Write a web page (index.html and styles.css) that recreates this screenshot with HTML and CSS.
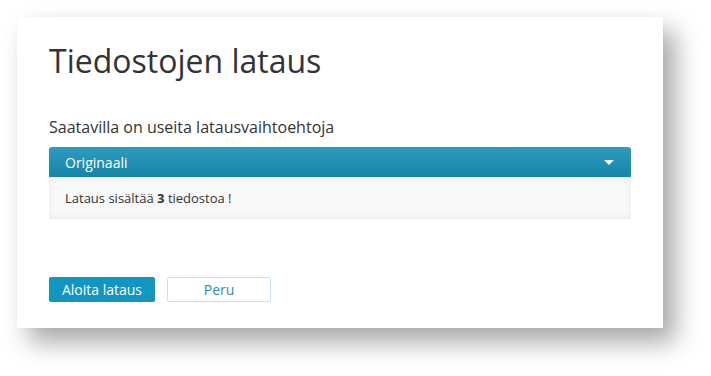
FILE: index.html
```html
<!DOCTYPE html>
<html lang="fi">
<head>
    <meta charset="UTF-8">
    <meta name="viewport" content="width=device-width, initial-scale=1.0">
    <title>Tiedostojen lataus</title>
    <link rel="stylesheet" href="styles.css">
</head>
<body>
    <div class="dialog">
        <h1>Tiedostojen lataus</h1>
        <p class="lead">Saatavilla on useita latausvaihtoehtoja</p>

        <div class="option">
            <div class="option-head">
                <span>Originaali</span>
                <span class="caret"></span>
            </div>
            <div class="option-body">Lataus sisältää <b>3</b> tiedostoa !</div>
        </div>

        <div class="actions">
            <button class="btn btn-primary">Aloita lataus</button>
            <button class="btn btn-cancel">Peru</button>
        </div>
    </div>
</body>
</html>
```

FILE: styles.css
```css
body {
    font-family: 'Open Sans', 'Liberation Sans', sans-serif;
    background-color: #fff;
    margin: 0;
    padding: 17px 0 0 17px;
    min-height: 100vh;
    box-sizing: border-box;
}

.dialog {
    width: 646px;
    height: 311px;
    box-sizing: border-box;
    background-color: #fff;
    padding: 24px 32px 0 32px;
    box-shadow: 12px 14px 24px rgba(0,0,0,0.35), 0 0 3px rgba(0,0,0,0.04);
}

h1 {
    font-size: 32px;
    font-weight: 400;
    color: #333;
    line-height: 40px;
    margin: 0;
}

.lead {
    font-size: 16px;
    color: #333;
    line-height: 22px;
    margin: 35px 0 0 0;
}

.option {
    margin-top: 9px;
    width: 582px;
}

.option-head {
    height: 30px;
    border-radius: 3px 3px 0 0;
    background: linear-gradient(#2f9cbe, #1484a8);
    color: #fff;
    font-size: 14px;
    display: flex;
    align-items: center;
    justify-content: space-between;
    padding: 0 17px 0 16px;
}

.caret {
    width: 0;
    height: 0;
    border-left: 5px solid transparent;
    border-right: 5px solid transparent;
    border-top: 5px solid #fff;
}

.option-body {
    height: 42px;
    box-sizing: border-box;
    background-color: #f8f8f8;
    box-shadow: inset 0 0 6px rgba(0,0,0,0.06);
    border-bottom: 1px solid #ebebeb;
    font-size: 13px;
    color: #333;
    padding: 12px 16px 0 16px;
}

.option-body b {
    font-weight: 700;
}

.actions {
    margin-top: 58px;
    display: flex;
    gap: 12px;
}

.btn {
    font-family: 'Open Sans', 'Liberation Sans', sans-serif;
    font-size: 14px;
    height: 25px;
    width: 106px;
    padding: 0;
    border-radius: 2px;
    cursor: pointer;
}

.btn-primary {
    background-color: #1196c1;
    border: none;
    color: #fff;
}

.btn-cancel {
    width: 104px;
    background-color: #fff;
    border: 1px solid #c6e2ec;
    color: #2a8cba;
}
```
